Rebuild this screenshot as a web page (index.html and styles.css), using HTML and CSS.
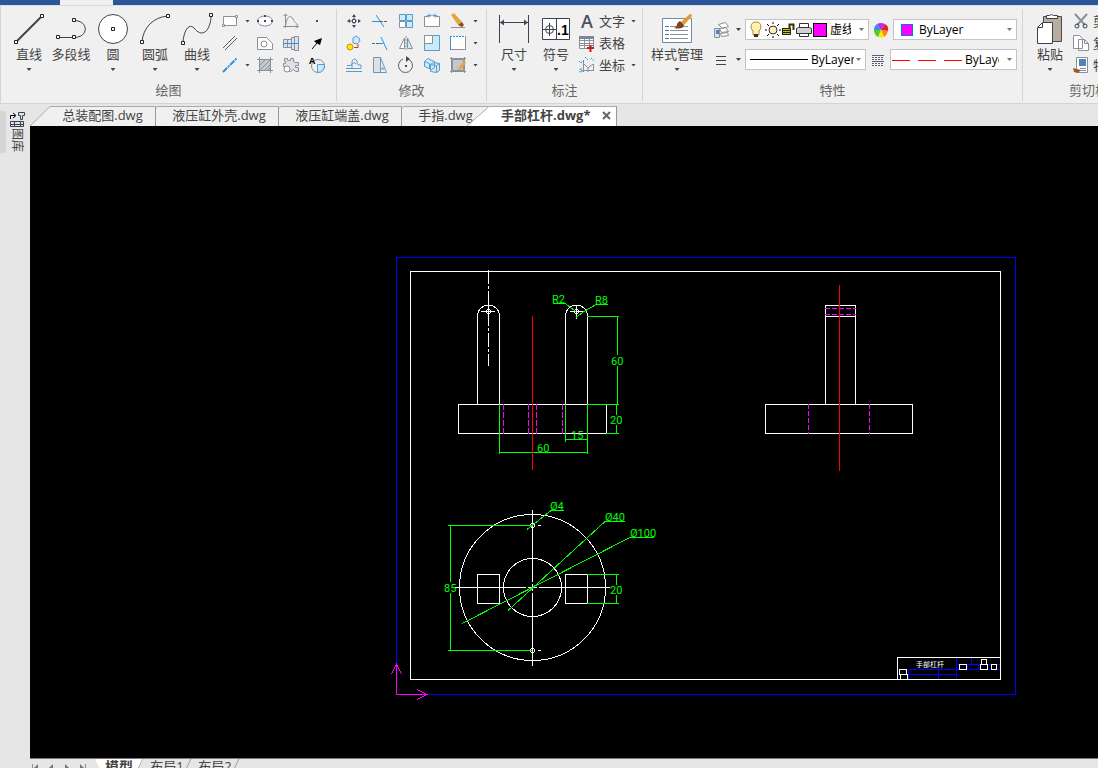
FILE: index.html
```html
<!DOCTYPE html>
<html lang="zh-CN">
<head>
  <meta charset="UTF-8">
  <title>手部杠杆.dwg</title>
  <link rel="stylesheet" href="styles.css">
</head>
<body>
  <div class="menu-strip"><span class="menu-active"></span></div>

  <!-- Ribbon -->
  <header class="ribbon">
    <section class="group draw">
      <div class="tools">
        <button class="big">
          <svg width="32" height="32"><path class="ink thick" d="M3 29L29 3"/><path class="grip" d="M1.500 27.500h3v3h-3zM27.500 1.500h3v3h-3z"/></svg>
          <span>直线</span><i class="arrow"></i>
        </button>
        <button class="big">
          <svg width="32" height="32"><path class="ink" d="M3 24.500H19C34 24.500 34 7.500 19 7.500"/><path class="grip" d="M1.500 22.500h3v3h-3zM17.500 22.500h3v3h-3zM17.500 5.500h3v3h-3z"/></svg>
          <span>多段线</span>
        </button>
        <button class="big">
          <svg width="32" height="32"><circle cx="16" cy="16" r="14.500" class="outline white"/><path class="grip" d="M14.500 14.500h3v3h-3z"/></svg>
          <span>圆</span><i class="arrow"></i>
        </button>
        <button class="big">
          <svg width="32" height="32"><path class="ink" d="M3 29C4 15 14 4 29 3"/><path class="grip" d="M1.500 27.500h3v3h-3zM27.500 1.500h3v3h-3z"/></svg>
          <span>圆弧</span><i class="arrow"></i>
        </button>
        <button class="big">
          <svg width="32" height="32"><path class="ink" d="M2 29C3 17 8 10 13 15C17 20 20 21 24 19C28 16 30 9 30 3"/><path class="grip" d="M0.500 28.500h3v3h-3zM28.500 0.500h3v3h-3z"/></svg>
          <span>曲线</span><i class="arrow"></i>
        </button>
        <div class="icons draw-icons">
          <button aria-label="矩形"><svg width="18" height="18"><path class="gray white" d="M2.500 4.500h13v9h-13z"/><path class="gray white" d="M1.500 12.500h2v2h-2zM14.500 3.500h2v2h-2z"/></svg></button>
          <button aria-label="更多矩形"><i class="arrow"></i></button>
          <button aria-label="椭圆"><svg width="18" height="18"><ellipse class="gray white" cx="9" cy="9" rx="7.500" ry="5"/><path class="dark-fill" d="M8 3h2v2H8zM8 8h2v2H8zM1 8h2v2H1zM15 8h2v2h-2z"/></svg></button>
          <button aria-label="公式曲线"><svg width="18" height="18"><path class="gray" d="M3.500 2v14M1 14.500h16M1.500 4l2-2 2 2M14 12.500l2 2-2 2M3.500 14C5 3 9 3 11 7S15 12 16 13"/></svg></button>
          <button aria-label="点"><svg width="18" height="18"><path class="dark-fill" d="M8 8h2v2H8z"/></svg></button>

          <button aria-label="平行线"><svg width="18" height="18"><path class="dark" d="M2 14L14 2M4 16L16 4"/></svg></button>
          <span></span>
          <button aria-label="轮廓"><svg width="18" height="18"><path class="gray white" d="M1.500 3.500h9l6 6v6h-15z"/><circle class="gray" cx="8" cy="10" r="3"/></svg></button>
          <button aria-label="轴孔"><svg width="18" height="18"><path class="gray soft" d="M1.500 5.500h8v8h-8zM9.500 3.500h3v12h-3zM12.500 2.500h4v14h-4zM5.500 5.500v8"/><path class="azure" d="M1 9.500h16"/></svg></button>
          <button aria-label="箭头"><svg width="18" height="18"><path class="black" d="M4 15l5-6"/><path d="M14 4l-2 7-2-1-3-2-1-1z"/></svg></button>

          <button aria-label="构造线"><svg width="18" height="18"><path class="azure thick" stroke-dasharray="6 1 2 1" d="M2 16L16 2"/></svg></button>
          <button aria-label="更多构造线"><i class="arrow"></i></button>
          <button aria-label="填充"><svg width="18" height="18"><path class="gray hatch" d="M3.500 3.500h11v7q0 4-4 4h-7z"/><path class="gray" d="M1 3.500h16M3.500 1v16M1 14.500h16M14.500 1v16"/><path class="gray" d="M4 9l5-5M4 14L14 4M9 14l5-5"/></svg></button>
          <button aria-label="齿轮"><svg width="18" height="18"><path class="gray soft" d="M2.500 2.500h3v2h3v-2h3v3l2 1h3v3h-3v2h3v4h-3l-2-2-3 2H3v-5H1.500v-3h2v-2h-1z"/><circle class="gray white" cx="5" cy="13" r="3"/></svg></button>
          <button aria-label="局部放大"><svg width="18" height="18"><circle class="gray" cx="10" cy="10" r="6.500"/><path class="blue sky" d="M9.500 8.500h7q0 8-7 8z"/><text class="tiny" x="1" y="8">A</text></svg></button>
        </div>
      </div>
      <h2>绘图</h2>
    </section>

    <section class="group modify">
      <div class="tools">
        <div class="icons modify-icons">
          <button aria-label="移动"><svg width="18" height="18"><path class="dark" stroke-dasharray="4 1" d="M9 3v12M3 9h12"/><path class="dark-fill" d="M9 2l2 3H7zM9 16l2-3H7zM2 9l3-2v4zM16 9l-3-2v4z"/><path class="outline white" d="M7.500 7.500h3v3h-3z"/></svg></button>
          <button aria-label="裁剪"><svg width="18" height="18"><path class="azure" d="M1 9.500h8M5 3l8 12"/><path class="dark" stroke-dasharray="3 1" d="M9 9.500h8"/></svg></button>
          <button aria-label="阵列"><svg width="18" height="18"><path class="blue sky" d="M2.500 2.500h6v6h-6zM9.500 2.500h6v6h-6zM9.500 9.500h6v6h-6z"/><path class="gray white" d="M2.500 9.500h6v6h-6z"/></svg></button>
          <button aria-label="打断"><svg width="18" height="18"><path class="gray white" d="M6 4.500H1.500v10h15v-10H12"/><path class="blue" d="M4 3.500h4M6 1.500l2 2-2 2M14 3.500h-4M12 1.500l-2 2 2 2"/></svg></button>
          <button aria-label="删除"><svg width="18" height="18"><path fill="#e8a43c" d="M2 3l3-2 8 9-4 3z"/><path fill="#8b4a25" d="M9 13l4-3 2 3-2 2z"/><path class="gray" d="M2 15.500h14"/></svg></button>
          <button aria-label="更多删除"><i class="arrow"></i></button>

          <button aria-label="平移复制"><svg width="18" height="18"><path class="blue sky" d="M8 4l3-2 3 2 1 3-3 3-4-1z"/><circle cx="5" cy="13" r="3" fill="#ffe600" stroke="#b89b00"/><path stroke="#c0392b" fill="none" d="M9 13.500h4V10"/></svg></button>
          <button aria-label="延伸"><svg width="18" height="18"><path class="dark" stroke-dasharray="3 1" d="M1 9.500h10"/><path class="azure" d="M8 9.500h4M10 3l6 13"/></svg></button>
          <button aria-label="镜像"><svg width="18" height="18"><path class="gray white" d="M7.500 4v10.500h-5z"/><path class="gray sky" d="M10.500 4v10.500h5z"/><path class="gray" stroke-dasharray="2 1" d="M9 2v15"/></svg></button>
          <button aria-label="缩放"><svg width="18" height="18"><path class="blue sky" d="M1.500 1.500h15v15h-15z"/><path class="gray white" d="M1.500 1.500h8v8h-8z"/></svg></button>
          <button aria-label="拉伸"><svg width="18" height="18"><path fill="#fff" d="M1 2h16v14H1z"/><path class="gray" d="M1.500 2v13.500h15V2"/><path class="azure" stroke-dasharray="2 1" d="M1 2.500h16M1.500 2v14"/></svg></button>
          <button aria-label="更多拉伸"><i class="arrow"></i></button>

          <button aria-label="等距线"><svg width="18" height="18"><path class="blue" d="M1 15.500h16"/><path class="blue" d="M1 12.500h15M2 9.500h3q2 0 2-2V5q3-4 5 0v2q0 2 2 2h2v3M7 12V8q2-3 4 0"/></svg></button>
          <button aria-label="拔模"><svg width="18" height="18"><path class="gray soft" d="M2.500 1.500h7v15h-7z"/><path class="blue" d="M9.500 1.500l6 15h-13M9 13h4l-2-2"/></svg></button>
          <button aria-label="旋转"><svg width="18" height="18"><path class="dark" d="M6 3a7 7 0 1 0 5 0"/><path class="dark-fill" d="M9 0l4 3-4 3zM8 9h2v2H8z"/></svg></button>
          <button aria-label="分解"><svg width="18" height="18"><path class="blue sky" d="M1.500 5.500l3-3 7 3v6l-3 2-7-3zM7.500 8.500l3-2 6 1v7l-3 2-6-1zM7.500 8.500l6 1 3-2M13.500 9.500v7M1.500 5.500l5 2v5"/></svg></button>
          <button aria-label="编辑填充"><svg width="18" height="18"><path class="gray hatch" d="M3.500 3.500h11v11h-11z"/><path class="gray" d="M1 2.500h16M2.500 1v16M1 15.500h16M15.500 1v16"/><path fill="#e8a43c" d="M15 5l2 2-5 6-3 1 1-3z"/></svg></button>
          <button aria-label="更多编辑"><i class="arrow"></i></button>
        </div>
      </div>
      <h2>修改</h2>
    </section>

    <section class="group annotate">
      <div class="tools">
        <button class="big">
          <svg width="32" height="32"><path class="outline" d="M1.500 2v28M30.500 2v28M2 9.500h28"/><path class="dark-fill" d="M2 9.500l4-3v6zM30 9.500l-4-3v6z"/></svg>
          <span>尺寸</span><i class="arrow"></i>
        </button>
        <button class="big">
          <svg width="32" height="32"><path class="outline white" d="M2.500 5.500h27v21h-27zM16.500 5.500v21M3 16.500h13M9.500 10v13"/><circle class="outline" cx="9.500" cy="16.500" r="4"/><text class="mark" x="17" y="22">.1</text></svg>
          <span>符号</span><i class="arrow"></i>
        </button>
        <div class="rows">
          <button><svg width="18" height="18"><text class="letter" x="3" y="16">A</text></svg>文字<i class="arrow"></i></button>
          <button><svg width="18" height="18"><path class="gray white" d="M1.500 2.500h14v12h-14zM2 9.500h13M2 11.500h13M2 6.500h13M6.500 5v9M11.500 5v9"/><path fill="#7b8798" d="M1 2h15v3H1z"/><path stroke="#c8191e" stroke-width="2" d="M9 14h7M12.500 11v7"/></svg>表格</button>
          <button><svg width="18" height="18"><path class="gray" d="M5.500 4v12M4 14.500h12M6 8l4 4 5-4M10 12v4M15.500 8v6"/><path class="azure" stroke-dasharray="2 1" d="M1 5l2 2 2-2M7 1l3 3M13 2l3 3M2 13h2v3H2z"/></svg>坐标<i class="arrow"></i></button>
        </div>
      </div>
      <h2>标注</h2>
    </section>

    <section class="group props">
      <div class="tools">
        <button class="big wide">
          <svg width="32" height="32"><path class="white" stroke="#6f8aa5" d="M1.500 5.500h29v24h-29z"/><path class="gray" d="M9 13.500h18M9 17.500h18M9 21.500h18M9 25.500h18"/><path stroke="#4478aa" d="M4 13.500h4M4 17.500h4M4 21.500h4M4 25.500h4"/><path fill="#e69a2e" d="M20 9L29 1h1l1 2-8 9z"/><path fill="#7d4217" d="M19 8l4 4q-1 5-10 3 3-1 3-4 1-2 3-3z"/></svg>
          <span>样式管理</span><i class="arrow"></i>
        </button>
        <div class="fields">
          <div class="line">
            <button class="split" aria-label="图层"><svg width="18" height="18"><path class="gray white" d="M6.500 3.500l7-2 3 4-6 2zM7.500 7.500l6-1 3 4-7 1zM8.500 12.500l7-1 1 3-7 1z"/><path class="gray soft" d="M2.500 7.500h5v9h-5z"/><path fill="#4d83b8" d="M4 9h3v4H4z"/></svg><i class="arrow"></i></button>
            <div class="combo">
              <svg width="18" height="18"><path d="M9 1q5 0 5 5 0 2-2 4v4H6v-4Q4 8 4 6q0-5 5-5z" fill="#fff2a8" stroke="#a58b45"/><path fill="#333" d="M7 13h4v3H7z"/></svg>
              <svg width="16" height="18"><circle cx="8" cy="9" r="4" fill="#ffeebc" stroke="#333"/><path class="black" d="M8 1v2M8 15v2M0 9h2M14 9h2M2 3l2 2M12 13l2 2M14 3l-2 2M2 15l2-2"/></svg>
              <svg width="14" height="18"><path fill="#222" d="M1 7h9v7H1z"/><path stroke="#c5c500" d="M2 8.500h7M2 10.500h7M2 12.500h7"/><path d="M8.500 7V3.500h4V9" fill="none" stroke="#333300" stroke-width="2"/></svg>
              <svg width="18" height="18"><path fill="#fff" stroke="#333" d="M4.500 6V2.500h9V6M4.500 12.500v3h9v-3"/><path fill="#d2d2d2" stroke="#333" d="M1.500 7.500l2-1h11l2 1v5h-15z"/></svg>
              <span class="swatch black-line"></span>
              <select aria-label="当前层"><option>虚线层</option></select>
            </div>
            <span class="mini"><svg width="16" height="16"><path fill="#b42df2" d="M8 8L4 2Q8 0 12 2z"/><path fill="#e02030" d="M8 8l4-6q4 2 3 7z"/><path fill="#ff8a00" d="M8 8l7 1q-1 4-4 6z"/><path fill="#ffe500" d="M8 8l3 7q-3 1-6 0z"/><path fill="#55c928" d="M8 8l-3 7Q1 13 1 8z"/><path fill="#3b8cf0" d="M8 8H1q0-4 3-6z"/></svg></span>
            <div class="combo">
              <span class="swatch blue-line"></span>
              <select aria-label="颜色"><option>ByLayer</option></select>
            </div>
          </div>
          <div class="line">
            <button class="split" aria-label="线宽设置"><svg width="18" height="18"><path class="outline" d="M4 5.500h10M4 9.500h10M4 13.500h10"/></svg><i class="arrow"></i></button>
            <div class="combo roomy">
              <svg class="sample" width="58" height="10"><path class="black" d="M0 4.500h58"/></svg>
              <select aria-label="线宽"><option>ByLayer</option></select>
            </div>
            <span class="mini"><svg width="14" height="14"><path class="dark" d="M1 2.500h12M1 8.500h12"/><path class="dark" stroke-dasharray="2 1" d="M1 4.500h12M1 6.500h12M1 10.500h12M1 12.500h12"/></svg></span>
            <div class="combo tight">
              <svg class="sample" width="70" height="10"><path stroke="#f00" stroke-dasharray="18 8" d="M0 5.500h70"/></svg>
              <select aria-label="线型"><option>ByLayer</option></select>
            </div>
          </div>
        </div>
      </div>
      <h2>特性</h2>
    </section>

    <section class="group clip">
      <div class="tools">
        <button class="big">
          <svg width="32" height="32"><path fill="#b9ada0" stroke="#4a4a4a" d="M9.500 3.500h18v25h-18z"/><path class="outline white" d="M12.500 5.500v-3h3q2-2 4 0h4v3zM3.500 14.500l5-5h10v21h-15zM8.500 10v4.500H4"/></svg>
          <span>粘贴</span><i class="arrow"></i>
        </button>
        <div class="rows">
          <button><svg width="18" height="18"><path class="gray thick" d="M3 2l10 11M15 2L5 13"/><circle class="outline" cx="5" cy="14" r="2"/><circle class="outline" cx="13" cy="14" r="2"/></svg>剪切</button>
          <button><svg width="18" height="18"><path class="gray white" d="M1.500 1.500h6l3 3v10h-9zM6.500 5.500h6l4 4v7h-10zM12.500 5.500v4h4"/></svg>复制</button>
          <button><svg width="18" height="18"><path class="gray white" d="M4.500 1.500h11v15h-11z"/><path fill="#4d83b8" d="M7 3h7v7H7z"/><path class="gray" d="M8 12.500h6M8 14.500h6"/><path fill="#9b5a22" d="M1 12l4 1 4 1-3 3-4-1z"/></svg>特性</button>
        </div>
      </div>
      <h2>剪切板</h2>
    </section>
  </header>

  <div class="workspace">
    <aside class="sidebar">
      <button class="library">
        <svg width="16" height="17"><path class="black" d="M1.500 8V4.500H6M4 2l3 2.500L4 7"/><path class="outline soft" d="M9.500 1.500h6v3h-2v4h-2v-4h-2zM1.500 10.500h13v5h-13zM2 13.500h12M5.500 11v4M11.500 11v4"/></svg>
        <span>图库</span>
      </button>
    </aside>

    <main>
      <!-- Open drawings -->
      <nav class="doc-tabs">
        <svg class="slope" width="20" height="20"><path d="M0 20L20 0v20z" fill="#f0f0f0"/><path class="edge" d="M0 20L20 0.500"/></svg>
        <button class="first">总装配图.dwg</button>
        <button>液压缸外壳.dwg</button>
        <button>液压缸端盖.dwg</button>
        <button class="last">手指.dwg</button>
        <svg class="slope over" width="22" height="20"><path d="M0 20L22 0v20z" fill="#fff"/><path class="edge" d="M0 20L22 0.500"/></svg>
        <button class="active">手部杠杆.dwg*<svg width="9" height="9"><path d="M1 1l7 7M8 1L1 8"/></svg></button>
      </nav>

      <!-- Drawing -->
      <div class="canvas">
        <svg class="drawing">
          <g transform="translate(-30 -126)">
            <rect class="b" x="396.500" y="257.500" width="619" height="437"/>
            <rect class="w" x="410.500" y="271.500" width="590" height="408"/>

            <!-- front view -->
            <path class="w" d="M458.500 404.500h148v29h-148zM477.500 404V316a11 11 0 0 1 22 0V404M565.500 404V316a11 11 0 0 1 22 0V404"/>
            <path class="w" stroke-dasharray="14 2 3 2" d="M488.500 270v96"/>
            <path class="w" d="M481 311.500h14M488.500 305v12M570 311.500h13M576.500 305v14"/>
            <circle class="w" cx="488.500" cy="311.500" r="2"/>
            <circle class="w" cx="576.500" cy="311.500" r="2"/>
            <path class="m" stroke-dasharray="6 2" d="M503.500 404v30M528.500 404v30M536.500 404v30M562.500 404v30"/>
            <path class="g" d="M587 316.500h32M617.500 316v39M617.500 366v38M587 404.500h32M616.500 404v11M616.500 425v8M606 433.500h13M565.500 404v38M565 439.500h22M499.500 404v50M587.500 404v50M499 452.500h88M553 303.500h12l11 8M608 304.500h-12l-12 7-8 6"/>
            <path class="r" d="M532.500 316v154"/>
            <g class="dims">
              <text x="552" y="303">R2</text>
              <text x="595" y="304">R8</text>
              <text x="611" y="365">60</text>
              <text x="610" y="424">20</text>
              <text x="571" y="439">15</text>
              <text x="537" y="452">60</text>
            </g>

            <!-- side view -->
            <path class="w" d="M765.500 404.500h147v29h-147zM825.500 404V305.500h30V404M825 316.500h30"/>
            <path class="m" stroke-dasharray="5 2" d="M825 308.500h31M825 314.500h31M808.500 404v30M869.500 404v30"/>
            <path class="r" d="M839.500 285v186"/>

            <!-- top view -->
            <circle class="w" cx="532.500" cy="587.500" r="73"/>
            <circle class="w" cx="532.500" cy="587.500" r="29"/>
            <path class="w" d="M477.500 574.500h22v29h-22zM565.500 574.500h22v29h-22zM532.500 510v72M532.500 584v7M532.500 593v73M455 587.500h71M528 587.500h9M539 587.500h71M538 525.500h3M538 650.500h3"/>
            <circle class="w" cx="532.500" cy="525.500" r="2"/>
            <circle class="w" cx="532.500" cy="650.500" r="2"/>
            <path class="g" d="M448 525.500h84M448 650.500h84M450.500 525v57M450.500 593v57M587 574.500h32M587 603.500h32M616.500 574v11M616.500 595v8M564 510.500h-13l-24 19M625 521.500h-20l-97 89M654 537.500h-24l-168 86"/>
            <g class="dims">
              <text x="550" y="510">Ø4</text>
              <text x="605" y="521">Ø40</text>
              <text x="630" y="537">Ø100</text>
              <text x="444" y="592">85</text>
              <text x="610" y="594">20</text>
            </g>

            <!-- title block -->
            <path class="b" d="M956.500 657v22M908 669.500h48M898 674.500h58M908.500 669v10M938.500 669v10M956 664.500h44M956 669.500h44M971.500 658v6M967.500 664v5M978.500 664v5"/>
            <path class="w" d="M897.500 679v-21.500h103"/>
            <path class="w box" d="M899.500 669.500h7v5h-7zM900.500 674.500h7v5h-7zM959.500 664.500h7v5h-7zM981.500 659.500h5v5h-5zM980.500 664.500h7v5h-7zM991.500 664.500h5v5h-5z"/>
            <text class="block-name" x="916" y="667">手部杠杆</text>

            <!-- ucs -->
            <path class="m" d="M396.500 664v30.500H427"/>
            <path class="m" d="M391.500 674l5-10 5 10M417 689.500l10 5-10 5"/>
          </g>
        </svg>
      </div>

      <!-- Layouts -->
      <nav class="layout-tabs">
        <button aria-label="首页"><svg width="8" height="12"><path class="gray" d="M1.500 4v8"/><path d="M7 4v8L2 9z"/></svg></button>
        <button aria-label="上一页"><svg width="8" height="12"><path d="M6 4v8L1 9z"/></svg></button>
        <button aria-label="下一页"><svg width="8" height="12"><path d="M2 4v8l5-3z"/></svg></button>
        <button aria-label="末页"><svg width="8" height="12"><path d="M1 4v8l5-3z"/><path class="gray" d="M6.500 4v8"/></svg></button>
        <button class="sheet current">模型</button>
        <button class="sheet">布局1</button>
        <button class="sheet">布局2</button>
      </nav>
    </main>
  </div>
</body>
</html>
```
FILE: styles.css
```css
* {
  box-sizing: border-box;
}

body {
  margin: 0;
  height: 100vh;
  overflow: hidden;
  display: flex;
  flex-direction: column;
  background-color: #e6e6e6;
  color: #444;
  font-family: "Open Sans", "Noto Sans CJK SC", sans-serif;
  font-size: 13px;
}

button {
  padding: 0;
  border: none;
  background: none;
  color: inherit;
  font: inherit;
  cursor: pointer;
}

svg {
  display: block;
  flex: none;
  overflow: visible;
}

/* shared icon strokes */
.ink, .outline, .gray, .dark, .black, .blue, .azure {
  fill: none;
  stroke: #3c4350;
}

.gray {
  stroke: #8a8f98;
}

.dark {
  stroke: #59616d;
}

.black {
  stroke: #000;
}

.blue {
  stroke: #5b9bc9;
}

.azure {
  stroke: #2695dc;
}

.thick {
  stroke-width: 2;
}

.grip {
  fill: #fff;
  stroke: #222;
}

.white {
  fill: #fff;
}

.soft {
  fill: #dde2ea;
}

.sky {
  fill: #c9ebfb;
}

.hatch {
  fill: #c3c8cc;
}

.dark-fill {
  fill: #444b57;
}

.tiny {
  font-size: 9px;
  font-weight: bold;
}

.mark {
  font: bold 14px "Liberation Sans", sans-serif;
}

.letter {
  font: 600 18px "Open Sans", sans-serif;
  fill: #48505d;
}

.arrow {
  width: 5px;
  height: 3px;
  background-color: #444;
  clip-path: polygon(0 0, 100% 0, 50% 100%);
}

/* top strip */
.menu-strip {
  flex: none;
  height: 5px;
  padding-left: 60px;
  background-color: #2b579a;
}

.menu-active {
  display: block;
  width: 53px;
  height: 5px;
  background-color: #f0f0f0;
}

/* ribbon */
.ribbon {
  flex: none;
  display: flex;
  height: 99px;
  padding-top: 3px;
  overflow: hidden;
  background-color: #f0f0f0;
  border-top: 1px solid #dcdcdc;
  border-bottom: 1px solid #d4d4d4;
  border-left: 1px solid #d4d4d4;
}

.group {
  flex: none;
  height: 92px;
  border-right: 1px solid #d4d4d4;
}

.group h2 {
  margin: 0;
  color: #666;
  font-size: 13px;
  font-weight: normal;
  line-height: 18px;
  text-align: center;
}

.tools {
  display: flex;
  height: 72px;
  padding: 1px 0 0 4px;
}

.draw {
  width: 336px;
}

.draw .tools {
  padding-left: 7px;
}

.modify {
  width: 150px;
}

.annotate {
  width: 156px;
}

.annotate .tools,
.clip .tools {
  padding-left: 6px;
}

.props {
  width: 380px;
}

.clip {
  width: 132px;
}

.big {
  display: flex;
  flex-direction: column;
  align-items: center;
  flex: none;
  width: 42px;
  padding-top: 3px;
  line-height: 18px;
  white-space: nowrap;
}

.big .arrow {
  margin-top: 5px;
}

.wide {
  width: 60px;
}

.icons {
  display: grid;
  grid-auto-rows: 22px;
}

.icons button {
  display: flex;
  align-items: center;
  justify-content: center;
}

.draw-icons {
  grid-template-columns: 26px 9px 26px 26px 26px;
  margin-left: -1px;
}

.modify-icons {
  grid-template-columns: repeat(5, 26px) 9px;
}

.rows {
  display: flex;
  flex: none;
  flex-direction: column;
}

.rows button {
  display: flex;
  align-items: center;
  gap: 3px;
  height: 22px;
  padding-left: 1px;
  line-height: 18px;
  white-space: nowrap;
}

.rows .arrow {
  margin-left: 3px;
}

/* property fields */
.fields {
  flex: 1;
  min-width: 0;
  padding: 9px 5px 0 5px;
}

.line {
  display: flex;
  align-items: center;
  height: 21px;
  margin-bottom: 9px;
}

.split {
  display: flex;
  align-items: center;
  flex: none;
  gap: 6px;
  width: 33px;
}

.combo {
  position: relative;
  display: flex;
  align-items: center;
  flex: 1;
  min-width: 0;
  height: 21px;
  padding: 0 17px 0 1px;
  background-color: #fff;
  border: 1px solid #c3c3c3;
}

.combo.roomy {
  padding-right: 11px;
}

.combo::after {
  content: "";
  position: absolute;
  right: 4px;
  top: 8px;
  width: 5px;
  height: 3px;
  background-color: #777;
  clip-path: polygon(0 0, 100% 0, 50% 100%);
}

.combo select {
  flex: 1;
  min-width: 0;
  margin-left: 3px;
  padding: 0;
  appearance: none;
  border: none;
  background: none;
  color: #000;
  font: inherit;
  font-size: 12px;
}

.sample {
  margin-left: 3px;
}

.tight .sample {
  margin-left: 0;
  overflow: hidden;
}

.swatch {
  flex: none;
  width: 14px;
  height: 14px;
  background-color: #f0f;
}

.black-line {
  border: 1px solid #000;
}

.blue-line {
  width: 12px;
  height: 12px;
  margin: 0 3px 0 6px;
  border: 1px solid #0078d7;
}

.mini {
  display: flex;
  flex: none;
  justify-content: center;
  width: 24px;
}

/* workspace */
.workspace {
  display: grid;
  grid-template-columns: 30px 1fr;
  flex: 1;
  min-height: 0;
}

.sidebar {
  padding-top: 7px;
}

.library {
  display: flex;
  flex-direction: column;
  align-items: flex-end;
  width: 25px;
  height: 42px;
  border-left: 6px solid #d6d6d6;
  font-size: 12px;
}

.library span {
  writing-mode: vertical-rl;
  text-orientation: sideways;
  line-height: 16px;
}

main {
  display: flex;
  flex-direction: column;
  min-width: 0;
  min-height: 0;
}

.doc-tabs {
  display: flex;
  align-items: flex-end;
  flex: none;
  height: 22px;
}

.doc-tabs button {
  width: 123px;
  height: 20px;
  padding: 0 0 2px 4px;
  background-color: #f0f0f0;
  border-top: 1px solid #aaa;
  border-right: 1px solid #999;
  border-top-left-radius: 3px;
  line-height: 17px;
  white-space: nowrap;
}

.doc-tabs .first {
  width: 106px;
  padding-left: 0;
  border-top-left-radius: 0;
}

.doc-tabs .last {
  width: 87px;
  padding-left: 0;
  border-right: none;
}

.doc-tabs .active {
  display: flex;
  align-items: center;
  justify-content: space-between;
  width: 128px;
  padding: 0 5px 2px 12px;
  background-color: #fff;
  border-top-left-radius: 0;
  font-weight: bold;
}

.doc-tabs .active path {
  stroke: #666;
  stroke-width: 2;
}

.slope.over {
  z-index: 1;
  margin-left: -22px;
}

.edge {
  fill: none;
  stroke: #aaa;
}

.canvas {
  flex: 1;
  min-height: 0;
  background-color: #000;
}

.drawing {
  width: 100%;
  height: 100%;
  overflow: hidden;
}

.w, .g, .b, .m, .r {
  fill: none;
  stroke: #fff;
  shape-rendering: crispEdges;
}

.g {
  stroke: #0f0;
}

.b {
  stroke: #00f;
}

.m {
  stroke: #f0f;
}

.r {
  stroke: #f00;
}

.box {
  fill: #000;
}

.dims text {
  fill: #0f0;
  font: 11px Roboto, sans-serif;
}

.block-name {
  fill: #fff;
  font: 7px "Noto Sans CJK SC", sans-serif;
}

/* layout tabs */
.layout-tabs {
  display: flex;
  flex: none;
  height: 10px;
  overflow: hidden;
  border-top: 1px solid #777;
}

.layout-tabs button {
  position: relative;
  flex: none;
  width: 16px;
  height: 14px;
  line-height: 13px;
}

.layout-tabs button:first-child {
  margin-left: 1px;
}

.layout-tabs svg {
  fill: #777;
}

.layout-tabs .sheet {
  width: 48px;
  font-size: 13px;
}

.layout-tabs .sheet::after {
  content: "";
  position: absolute;
  top: 0;
  right: 3px;
  height: 14px;
  border-right: 1px solid #999;
  transform: skewX(-25deg);
}

.layout-tabs .current {
  background-color: #fff;
  clip-path: polygon(0 0, 100% 0, 42px 100%, 7px 100%);
  font-size: 14px;
  font-weight: bold;
}
```
